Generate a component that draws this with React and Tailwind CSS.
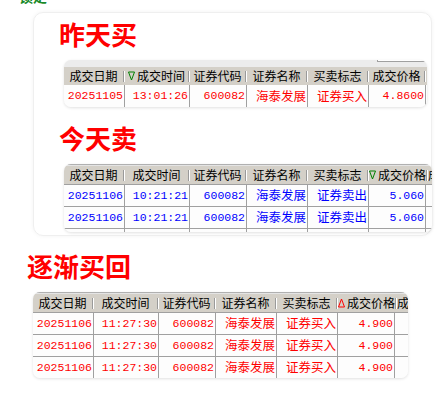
const COLS = [61, 65, 57, 61, 61, 57]
const HEADS = ['成交日期', '成交时间', '证券代码', '证券名称', '买卖标志', '成交价格']

function Tri({ up }) {
  return up ? (
    <svg width="7" height="10" viewBox="0 0 7 10" className="shrink-0">
      <polygon points="3.5,1 6.5,9 0.5,9" fill="none" stroke="#ff0000" strokeWidth="1" />
    </svg>
  ) : (
    <svg width="7" height="10" viewBox="0 0 7 10" className="shrink-0">
      <polygon points="0.5,1 6.5,1 3.5,9" fill="none" stroke="#008000" strokeWidth="1" />
    </svg>
  )
}

function Sep() {
  return <span className="w-[2px] h-[11px] shrink-0 border-l border-[#9a9a9a] border-r border-r-white" />
}

function Table({ rows, color, sortCol, up, extra, strip, rowLine, partial }) {
  return (
    <div
      className="rounded-[7px] overflow-hidden bg-[#f7f7f7] shadow-[0_1px_3px_rgba(0,0,0,0.12)]"
      style={{ width: 362 + extra }}
    >
      {strip === 'box' ? (
        <div className="h-[7px] bg-[#ececec] flex">
          <div className="flex-1" />
          <div className="w-[48px] h-[2px] mr-[2px] bg-white border-l border-b border-[#a0a0a0]" />
        </div>
      ) : (
        <div className="h-[2px] bg-[#e4e4e4] border-t border-[#b0b0b0]" />
      )}
      <div className="flex h-[18px] bg-[#d4d0c8] text-[12px] text-black leading-none">
        {HEADS.map((h, i) => (
          <div key={h} className="flex items-center shrink-0" style={{ width: COLS[i] }}>
            <div className="flex-1 flex items-center justify-center gap-[2px] whitespace-nowrap">
              {sortCol === i && <Tri up={up} />}
              <span>{h}</span>
            </div>
            <Sep />
          </div>
        ))}
        {extra > 3 && (
          <div className="flex-1 overflow-hidden flex items-center whitespace-nowrap pl-[2px]">成</div>
        )}
      </div>
      {rows.map((r, ri) => (
        <div
          key={ri}
          className={`flex h-[22px] bg-[#fdfdfd] ${rowLine ? 'border-t border-[#a0a0a0]' : ''}`}
          style={{ color }}
        >
          {r.map((c, ci) => (
            <div
              key={ci}
              className={`shrink-0 flex items-center justify-end pr-[1px] border-r border-[#a0a0a0] whitespace-nowrap ${
                ci === 3 || ci === 4
                  ? 'text-[12.5px]'
                  : "text-[11.5px] font-['Liberation_Mono','Noto_Sans_CJK_SC',monospace]"
              }`}
              style={{ width: COLS[ci] }}
            >
              {c}
            </div>
          ))}
          {extra > 0 && <div className="flex-1" />}
        </div>
      ))}
      {partial && (
        <div className="flex h-[4px] bg-[#fdfdfd] border-t border-[#a0a0a0]">
          {COLS.map((w, i) => (
            <div key={i} className="shrink-0 border-r border-[#a0a0a0]" style={{ width: w }} />
          ))}
        </div>
      )}
    </div>
  )
}

function Title({ children, className }) {
  return (
    <div className={`text-[26px] leading-[26px] font-bold text-[#ff0000] whitespace-nowrap ${className}`}>
      {children}
    </div>
  )
}

export default function App() {
  const buy1 = [['20251105', '13:01:26', '600082', '海泰发展', '证券买入', '4.8600']]
  const sell = [
    ['20251106', '10:21:21', '600082', '海泰发展', '证券卖出', '5.060'],
    ['20251106', '10:21:21', '600082', '海泰发展', '证券卖出', '5.060'],
  ]
  const buy2 = [
    ['20251106', '11:27:30', '600082', '海泰发展', '证券买入', '4.900'],
    ['20251106', '11:27:30', '600082', '海泰发展', '证券买入', '4.900'],
    ['20251106', '11:27:30', '600082', '海泰发展', '证券买入', '4.900'],
  ]

  return (
    <div className="w-[435px] h-[399px] bg-white overflow-hidden font-['Noto_Sans_CJK_SC',sans-serif]">
      {/* 上一张截图残留的绿色字脚 */}
      <div className="h-[4px] overflow-hidden pl-[19px]">
        <div className="-mt-[12px] text-[14px] leading-[16px] font-bold text-[#1a8a2a]">锁定</div>
      </div>

      <div className="ml-[33px] mt-[8px] w-[399px] rounded-[10px] border border-[#efefef] shadow-[0_0_4px_rgba(0,0,0,0.05)] pt-[8px] pb-[3px]">
        <Title className="pl-[25px]">昨天买</Title>
        <div className="pl-[30px] mt-[13px]">
          <Table rows={buy1} color="#ff0000" sortCol={1} extra={1} strip="box" />
        </div>
        <Title className="pl-[25px] mt-[18px]">今天卖</Title>
        <div className="pl-[30px] mt-[13px]">
          <Table rows={sell} color="#0000ff" sortCol={5} extra={6} rowLine partial />
        </div>
      </div>

      <Title className="pl-[27px] mt-[17px]">逐渐买回</Title>
      <div className="pl-[33px] mt-[13px]">
        <Table rows={buy2} color="#ff0000" sortCol={5} up extra={13} rowLine />
      </div>
    </div>
  )
}
